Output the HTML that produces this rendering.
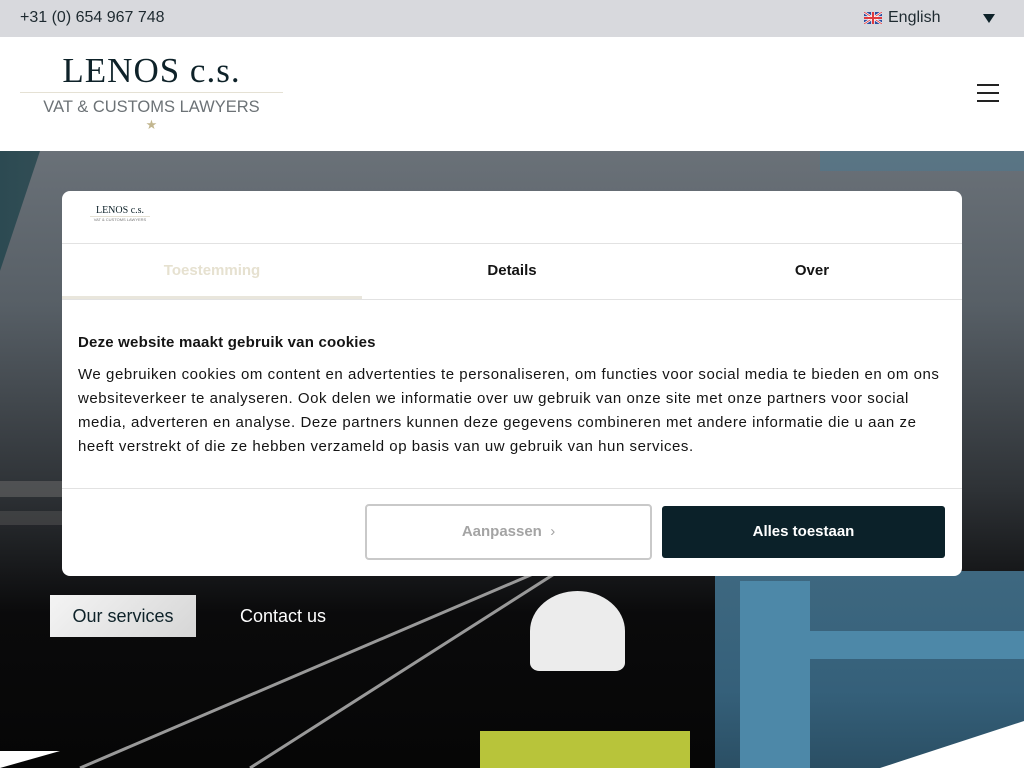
<!DOCTYPE html>
<html><head><meta charset="utf-8"><style>
*{margin:0;padding:0;box-sizing:border-box}
body{width:1024px;height:768px;overflow:hidden;font-family:"Liberation Sans",sans-serif;position:relative;background:#fff}
.top{height:37px;background:#d8d9dd;position:relative;color:#1e2a30;font-size:16px}
.top .ph{position:absolute;left:20px;top:9px}
.top .lang{position:absolute;left:864px;top:9px;display:flex;align-items:center;gap:6px}
.top .arr{position:absolute;left:983px;top:14px;width:0;height:0;border-left:6px solid transparent;border-right:6px solid transparent;border-top:9px solid #0e2229}
header{height:114px;position:relative;background:#fff}
.logo{position:absolute;left:20px;top:14px;width:263px;text-align:center}
.logo .n{font-family:"Liberation Serif",serif;font-size:35px;color:#0e2229;letter-spacing:1px;line-height:40px}
.logo .l{height:1px;background:#e5e1d4;margin:1px 0 4px}
.logo .s{font-size:16.5px;color:#6c7276;letter-spacing:0;line-height:20px;font-weight:300}
.logo .st{color:#c2b68f;font-size:13px;line-height:16px}
.burg{position:absolute;left:977px;top:47px;width:22px}
.burg i{display:block;height:2px;background:#222;margin-bottom:6px}
.hero{position:absolute;top:151px;left:0;width:1024px;height:617px;overflow:hidden;
background:linear-gradient(180deg,#6a7178 0%,#575f66 25%,#2e3236 55%,#0a0a0b 75%,#060606 100%)}
.blue{position:absolute;left:715px;top:420px;width:309px;height:200px;background:linear-gradient(180deg,#3e6880,#35607a 60%,#2a4e63)}
.crn{position:absolute;background:#4a7a92}
.btn1{position:absolute;left:50px;top:595px;width:146px;height:42px;background:linear-gradient(135deg,#f4f4f4,#d6d6d6);color:#0e2229;font-size:18px;text-align:center;line-height:42px}
.btn2{position:absolute;left:240px;top:595px;color:#fff;font-size:18px;line-height:42px}
.modal{position:absolute;left:62px;top:191px;width:900px;height:385px;background:#fff;border-radius:8px;overflow:hidden}
.mh{height:53px;border-bottom:1px solid #e2e2e2;position:relative}
.ml{position:absolute;left:28px;top:14px;width:60px;text-align:center}
.tabs{height:56px;display:flex;border-bottom:1px solid #e2e2e2;position:relative}
.tabs div{flex:1;text-align:center;line-height:54px;font-size:15px;font-weight:bold;color:#141414}
.tabs .a{color:#e6e1d0;border-bottom:3px solid #e9e6dc}
.body{padding:34px 16px 0;height:189px;border-bottom:1px solid #e2e2e2}
.body h3{font-size:15px;color:#141414;margin-bottom:12px;letter-spacing:.2px}
.body p{font-size:15px;line-height:24px;color:#141414;letter-spacing:.55px}
.b1{position:absolute;left:303px;top:313px;width:287px;height:56px;border:2px solid #c9c9c9;border-radius:4px;text-align:center;line-height:52px;color:#a4a4a4;font-weight:bold;font-size:15px}
.b2{position:absolute;left:600px;top:315px;width:283px;height:52px;background:#0b2129;border-radius:3px;text-align:center;line-height:52px;color:#fff;font-weight:bold;font-size:15px}
</style></head><body>
<div class="top"><span class="ph">+31 (0) 654 967 748</span>
<span class="lang"><svg width="18" height="12" viewBox="0 0 60 40"><rect width="60" height="40" fill="#2a4ea0"/><path d="M0 0L60 40M60 0L0 40" stroke="#fff" stroke-width="8"/><path d="M0 0L60 40M60 0L0 40" stroke="#e03a3e" stroke-width="3"/><path d="M30 0V40M0 20H60" stroke="#fff" stroke-width="12"/><path d="M30 0V40M0 20H60" stroke="#e03a3e" stroke-width="7"/></svg>English</span><span class="arr"></span></div>
<header><div class="logo"><div class="n">LENOS c.s.</div><div class="l"></div><div class="s">VAT &amp; CUSTOMS LAWYERS</div><div class="st">★</div></div>
<div class="burg"><i></i><i></i><i></i></div></header>
<div class="hero">
<div style="position:absolute;left:0;top:0;width:170px;height:240px;background:linear-gradient(90deg,#2c4a52,#44585e);clip-path:polygon(0 0,40px 0,0 120px)"></div>
<div class="blue"></div>
<div class="crn" style="left:820px;top:0;width:204px;height:20px;opacity:.5"></div>
<div class="crn" style="left:740px;top:430px;width:70px;height:190px;background:#4d88a8"></div>
<div class="crn" style="left:810px;top:480px;width:214px;height:28px;background:#4d88a8"></div>
<div style="position:absolute;left:0;top:330px;width:300px;height:16px;background:#666;opacity:.6"></div>
<div style="position:absolute;left:0;top:360px;width:300px;height:14px;background:#555;opacity:.5"></div>
<div style="position:absolute;left:530px;top:440px;width:95px;height:80px;background:#ececec;border-radius:50% 50% 10% 10%"></div>
<div style="position:absolute;left:480px;top:580px;width:210px;height:40px;background:#b8c43a"></div>
<svg style="position:absolute;left:0;top:0" width="1024" height="617"><path d="M80 617L540 420M250 617L700 330" stroke="#999" stroke-width="3"/><path d="M0 617L60 600L0 600Z" fill="#fff"/><path d="M880 617L1024 570V617Z" fill="#fff"/></svg>
</div>
<div class="btn1">Our services</div><div class="btn2">Contact us</div>
<div class="modal">
<div class="mh"><div class="ml"><div style="font-family:'Liberation Serif',serif;font-size:10px;color:#0e2229">LENOS c.s.</div><div style="height:1px;background:#e5e1d4"></div><div style="font-size:4px;color:#777">VAT &amp; CUSTOMS LAWYERS</div></div></div>
<div class="tabs"><div class="a">Toestemming</div><div>Details</div><div>Over</div></div>
<div class="body"><h3>Deze website maakt gebruik van cookies</h3>
<p>We gebruiken cookies om content en advertenties te personaliseren, om functies voor social media te bieden en om ons websiteverkeer te analyseren. Ook delen we informatie over uw gebruik van onze site met onze partners voor social media, adverteren en analyse. Deze partners kunnen deze gegevens combineren met andere informatie die u aan ze heeft verstrekt of die ze hebben verzameld op basis van uw gebruik van hun services.</p></div>
<div class="b1">Aanpassen &nbsp;<span style="font-weight:normal">›</span></div>
<div class="b2">Alles toestaan</div>
</div>
</body></html>
